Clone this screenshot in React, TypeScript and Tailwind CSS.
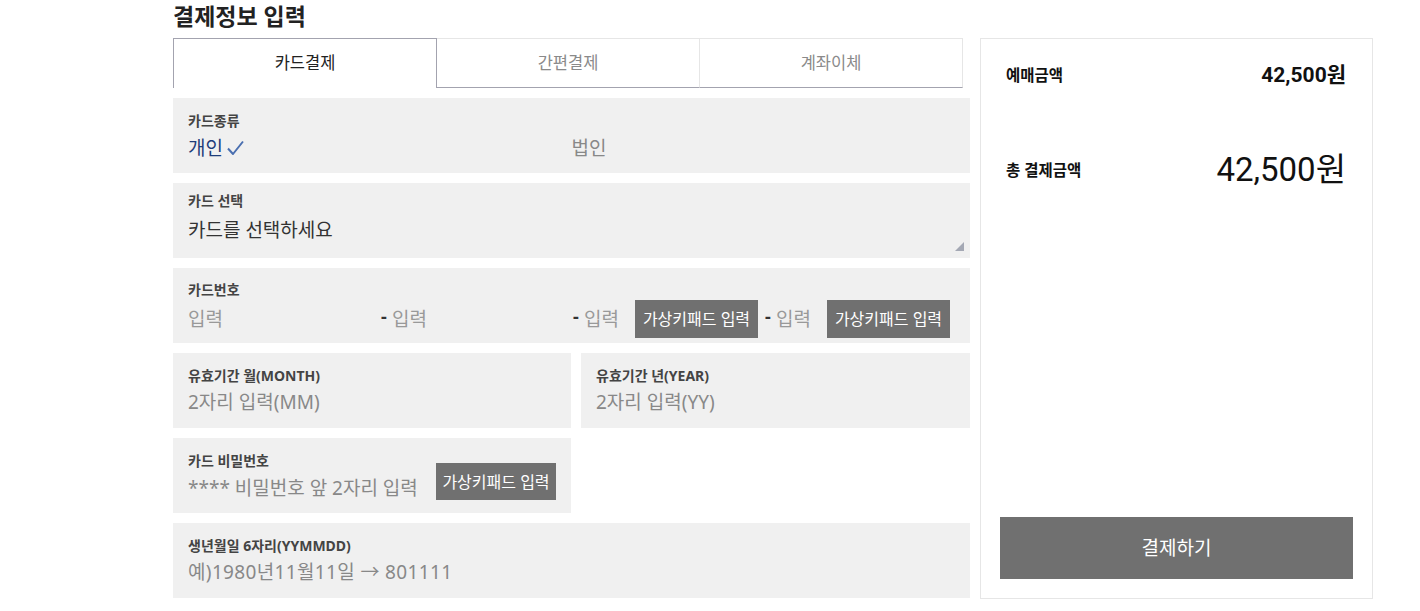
import React from 'react';

const FONT = "font-['Noto_Sans','Noto_Sans_CJK_KR',sans-serif]";

function Label({ children }: { children: React.ReactNode }) {
  return <div className="text-[14px] leading-[20px] font-bold text-[#444]">{children}</div>;
}

function KeypadButton() {
  return (
    <button className="h-[38px] w-[123px] shrink-0 bg-[#707070] text-[16px] text-white leading-[38px]">
      가상키패드 입력
    </button>
  );
}

function Dash() {
  return <span className="w-[11px] shrink-0 text-[18px] leading-[20px] font-bold text-[#333] -mt-[6px]">-</span>;
}

function Tabs() {
  const tabs = ['카드결제', '간편결제', '계좌이체'];
  return (
    <div className="flex h-[50px] w-[790px]">
      {tabs.map((t, i) =>
        i === 0 ? (
          <div
            key={t}
            className="flex w-[264px] items-center justify-center border-x border-t border-[#a3a3af] bg-white text-[16.5px] text-[#222]"
          >
            {t}
          </div>
        ) : (
          <div
            key={t}
            className="flex w-[263px] items-center justify-center border-t border-r border-t-[#e6e6e6] border-r-[#e6e6e6] border-b border-b-[#a3a3af] text-[16.5px] text-[#8a8a8a]"
          >
            {t}
          </div>
        )
      )}
    </div>
  );
}

function Box({ children, pt = 13, className = '' }: { children: React.ReactNode; pt?: number; className?: string }) {
  return (
    <div className={`relative h-[75px] bg-[#f0f0f0] px-[15px] ${className}`} style={{ paddingTop: pt }}>
      {children}
    </div>
  );
}

function Check() {
  return (
    <svg className="ml-[4px] inline-block align-[-1px]" width="17" height="16" viewBox="0 0 17 16">
      <path d="M1 8.5 L6 14 L16 1.5" fill="none" stroke="#4a6fb0" strokeWidth="2" strokeLinejoin="round" />
    </svg>
  );
}

export default function App() {
  return (
    <div className={`${FONT} min-h-[611px] bg-white pl-[173px]`}>
      <div className="flex gap-[10px]">
        {/* left column */}
        <div className="w-[797px]">
          <h2 className="h-[38px] pt-[1px] text-[23px] leading-[30px] font-bold text-[#222]">결제정보 입력</h2>
          <Tabs />

          <div className="mt-[10px] flex flex-col gap-[10px]">
            <Box>
              <Label>카드종류</Label>
              <div className="mt-[4px] grid grid-cols-2 text-[19px] leading-[26px]">
                <span className="text-[#1f3d7a]">
                  개인<Check />
                </span>
                <span className="text-[#888]">법인</span>
              </div>
            </Box>

            <Box pt={8}>
              <Label>카드 선택</Label>
              <div className="mt-[5px] text-[19px] leading-[28px] text-[#333]">카드를 선택하세요</div>
              <svg className="absolute right-[6px] bottom-[7px]" width="9" height="9" viewBox="0 0 9 9">
                <polygon points="9,0 9,9 0,9" fill="#a4a8b4" />
              </svg>
            </Box>

            <Box pt={12}>
              <Label>카드번호</Label>
              <div className="flex h-[38px] items-center text-[19px] text-[#999]">
                <span className="w-[193px] shrink-0">입력</span>
                <Dash />
                <span className="w-[181px] shrink-0">입력</span>
                <Dash />
                <span className="w-[51px] shrink-0">입력</span>
                <KeypadButton />
                <span className="w-[7px] shrink-0" />
                <Dash />
                <span className="w-[51px] shrink-0">입력</span>
                <KeypadButton />
              </div>
            </Box>

            <div className="flex gap-[10px]">
              <Box className="w-[398px]">
                <Label>유효기간 월(MONTH)</Label>
                <div className="mt-[3px] text-[19px] leading-[26px] text-[#888]">2자리 입력(MM)</div>
              </Box>
              <Box className="w-[389px]">
                <Label>유효기간 년(YEAR)</Label>
                <div className="mt-[3px] text-[19px] leading-[26px] text-[#888]">2자리 입력(YY)</div>
              </Box>
            </div>

            <Box className="w-[398px]">
              <Label>카드 비밀번호</Label>
              <div className="-mt-[8px] flex items-start">
                <span className="mt-[12px] w-[248px] shrink-0 text-[19px] leading-[26px] text-[#888]">
                  **** 비밀번호 앞 2자리 입력
                </span>
                <button className="h-[37px] w-[122px] bg-[#707070] text-[16px] text-white">가상키패드 입력</button>
              </div>
            </Box>

            <Box>
              <Label>생년월일 6자리(YYMMDD)</Label>
              <div className="mt-[3px] text-[19px] leading-[26px] tracking-[0.35px] text-[#888]">
                예)1980년11월11일 → 801111
              </div>
            </Box>
          </div>
        </div>

        {/* right summary panel */}
        <div className="mt-[38px] flex h-[561px] w-[393px] flex-col border border-[#e6e6e6] bg-white">
          <div className="mt-[23px] flex items-center justify-between pl-[25px] pr-[26px]">
            <span className="text-[15.5px] leading-[24px] font-bold text-[#111]">예매금액</span>
            <span className="font-['Roboto','Noto_Sans_CJK_KR',sans-serif] text-[21px] leading-[26px] font-bold text-[#111]">42,500원</span>
          </div>
          <div className="mt-[62px] flex items-center justify-between pl-[25px] pr-[26px]">
            <span className="text-[15.5px] leading-[24px] font-bold text-[#111]">총 결제금액</span>
            <span className="font-['Roboto','Noto_Sans_CJK_KR',sans-serif] text-[33px] leading-[40px] text-[#111]">42,500원</span>
          </div>
          <button className="mx-[19px] mt-auto mb-[19px] h-[62px] bg-[#707070] text-[19px] text-white">결제하기</button>
        </div>
      </div>
    </div>
  );
}
